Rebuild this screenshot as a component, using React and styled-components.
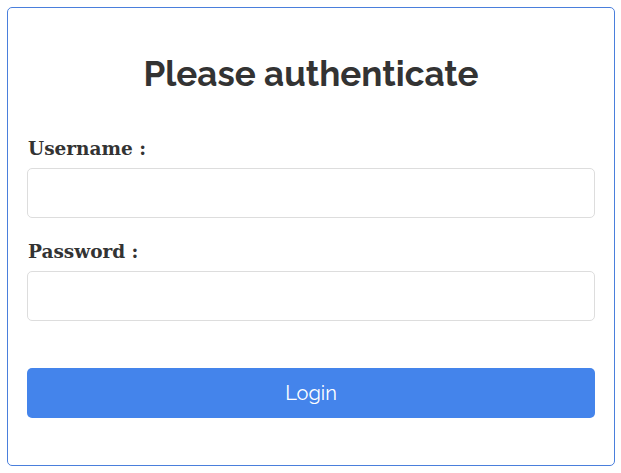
import React from 'react';
import styled, { createGlobalStyle } from 'styled-components';

const Global = createGlobalStyle`
	body {
		margin: 0;
		padding: 7px;
		background: #fff;
	}
`;

const Card = styled.form`
	width: 608px;
	height: 459px;
	box-sizing: border-box;
	border: 1px solid #4a7fdc;
	border-radius: 5px;
	padding: 0 19px;
	display: flex;
	flex-direction: column;
`;

const Title = styled.h1`
	margin: 44px 0 41px;
	font-family: Raleway, 'Open Sans', sans-serif;
	font-size: 35px;
	font-weight: 700;
	line-height: 44px;
	text-align: center;
	color: #333;
`;

const Label = styled.label`
	display: block;
	font-family: 'DejaVu Serif', serif;
	font-size: 18.5px;
	font-weight: 700;
	line-height: 24px;
	color: #333;
	margin-bottom: 7px;
	padding-left: 1px;
`;

const Field = styled.div`
	margin-bottom: ${p => p.gap}px;
`;

const Input = styled.input`
	display: block;
	width: 100%;
	height: 50px;
	box-sizing: border-box;
	border: 1px solid #ddd;
	border-radius: 5px;
	outline: none;
`;

const Button = styled.button`
	width: 100%;
	height: 50px;
	border: none;
	border-radius: 5px;
	background: #4484eb;
	color: #fff;
	font-family: Raleway, 'Open Sans', sans-serif;
	font-size: 20px;
	cursor: pointer;
`;

const App = () => (
	<>
		<Global />
		<Card onSubmit={e => e.preventDefault()}>
			<Title>Please authenticate</Title>
			<Field gap={22}>
				<Label>Username :</Label>
				<Input type='text' />
			</Field>
			<Field gap={47}>
				<Label>Password :</Label>
				<Input type='password' />
			</Field>
			<Button type='submit'>Login</Button>
		</Card>
	</>
);

export default App;
